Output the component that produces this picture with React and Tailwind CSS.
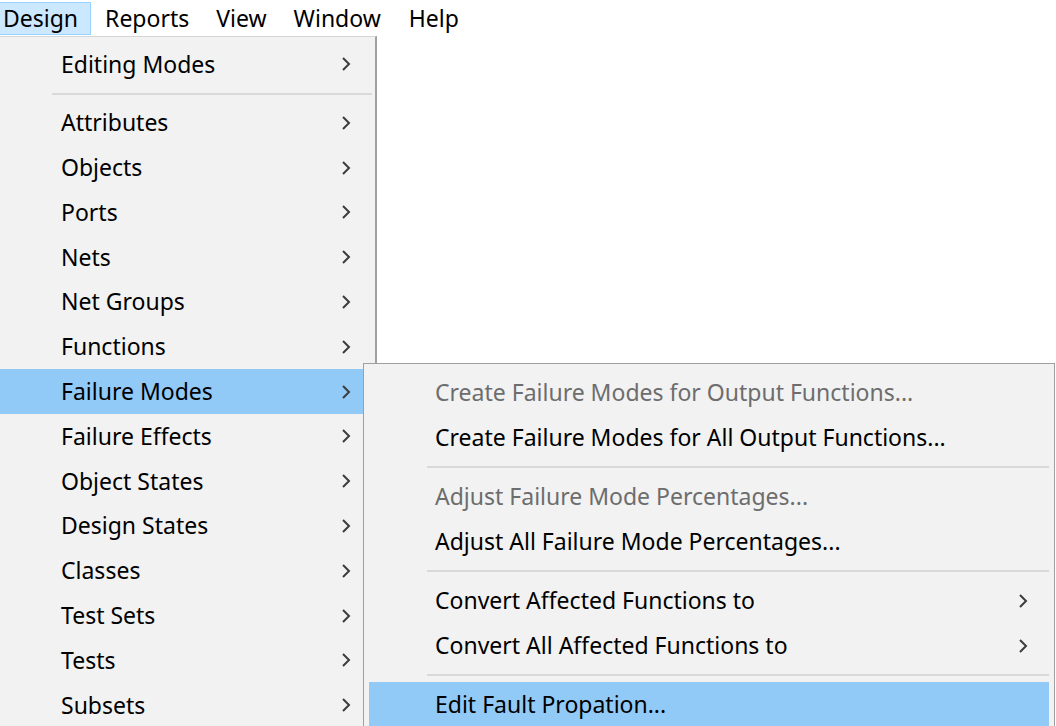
import React from "react";

function Chevron() {
  return (
    <svg width="10" height="16" viewBox="0 0 10 16" className="shrink-0">
      <polyline points="2,2 8,8 2,14" fill="none" stroke="#3c3c3c" strokeWidth="2" />
    </svg>
  );
}

function MainItem({ label, active }) {
  return (
    <div className={`flex h-[44.8px] items-center pr-[21px] ${active ? "bg-[#91c9f7]" : ""}`}>
      <span className="flex-1 pl-[61px] whitespace-nowrap">{label}</span>
      <Chevron />
    </div>
  );
}

function Sep({ h }) {
  return (
    <div className={`${h} flex items-center`}>
      <div className="h-[2px] bg-[#d9d9d9] w-full" />
    </div>
  );
}

function SubItem({ label, disabled, sub, active }) {
  return (
    <div className={`flex h-[44.8px] items-center pr-[21px] ${active ? "bg-[#91c9f7]" : ""}`}>
      <span className={`flex-1 pl-[66px] whitespace-nowrap ${disabled ? "text-[#6d6d6d]" : "text-black"}`}>{label}</span>
      {sub && <Chevron />}
    </div>
  );
}

export default function App() {
  const items = [
    "Attributes",
    "Objects",
    "Ports",
    "Nets",
    "Net Groups",
    "Functions",
    "Failure Modes",
    "Failure Effects",
    "Object States",
    "Design States",
    "Classes",
    "Test Sets",
    "Tests",
    "Subsets",
  ];
  return (
    <div className="w-[1056px] h-[726px] bg-white overflow-hidden font-['Noto_Sans',sans-serif] text-[23px] text-black leading-none">
      <div className="h-[36px] flex items-start pt-[2px]">
        <div className="-ml-[10px] h-[33px] px-[12px] bg-[#cce8ff] border border-[#99d1ff] flex items-center">Design</div>
        <div className="h-[33px] px-[14px] flex items-center">Reports</div>
        <div className="h-[33px] px-[13px] flex items-center">View</div>
        <div className="h-[33px] px-[14px] flex items-center">Window</div>
        <div className="h-[33px] px-[14px] flex items-center">Help</div>
      </div>
      <div className="relative">
        <div className="w-[377px] h-[700px] bg-[#f2f2f2] border-t border-[#d5d5d5] border-r-2 border-r-[#a0a0a0] pt-[5px] pr-[3px]">
          <MainItem label="Editing Modes" />
          <div className="pl-[52px]">
            <Sep h="h-[13.6px]" />
          </div>
          {items.map((l) => (
            <MainItem key={l} label={l} active={l === "Failure Modes"} />
          ))}
        </div>
        <div className="absolute left-[363px] top-[327px] w-[692px] h-[420px] bg-[#f2f2f2] border border-[#a0a0a0] pt-[6px] px-[5px]">
          <SubItem label="Create Failure Modes for Output Functions..." disabled />
          <SubItem label="Create Failure Modes for All Output Functions..." />
          <div className="pl-[58px]"><Sep h="h-[14.6px]" /></div>
          <SubItem label="Adjust Failure Mode Percentages..." disabled />
          <SubItem label="Adjust All Failure Mode Percentages..." />
          <div className="pl-[58px]"><Sep h="h-[14.6px]" /></div>
          <SubItem label="Convert Affected Functions to" sub />
          <SubItem label="Convert All Affected Functions to" sub />
          <div className="pl-[58px]"><Sep h="h-[14px]" /></div>
          <SubItem label="Edit Fault Propation..." active />
        </div>
      </div>
    </div>
  );
}
